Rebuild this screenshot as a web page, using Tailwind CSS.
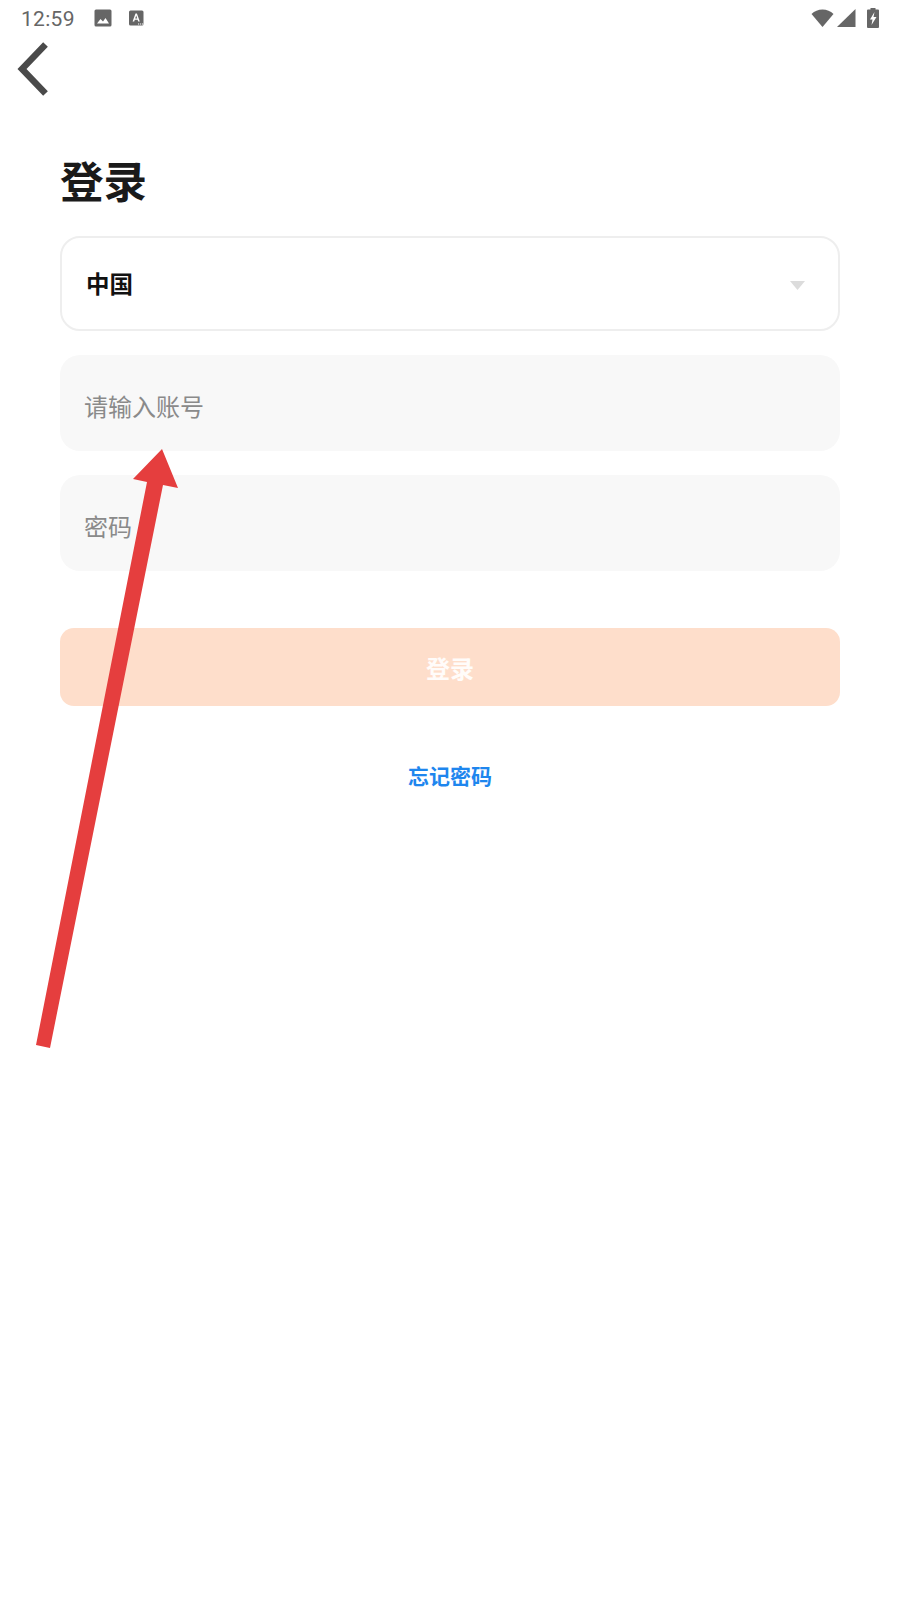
<!DOCTYPE html>
<html lang="zh-CN">
<head>
    <meta charset="UTF-8">
    <meta name="viewport" content="width=device-width, initial-scale=1.0">
    <title>登录</title>
    <script src="https://cdn.jsdelivr.net/npm/@tailwindcss/browser@4"></script>
</head>
<body class="bg-white font-['Roboto','Noto_Sans_CJK_SC',sans-serif]">
    <div class="relative w-[900px] h-[1600px] overflow-hidden bg-white">
        <!-- status bar -->
        <div class="flex items-center h-[36px] pl-[21px] pr-[21px] text-[#666666]">
            <span class="pt-[3px] text-[21px] leading-none tracking-[0.3px]">12:59</span>
            <svg class="ml-[19px]" width="18" height="18" viewBox="0 0 18 18">
                <rect x="0.5" y="0.5" width="17" height="17" rx="1.500" fill="#666666"/>
                <path d="M3 14.500l3.500-4.500 2.500 2.500 2.500-3.500 3.500 5.500z" fill="#ffffff"/>
            </svg>
            <svg class="ml-[17px]" width="15" height="16" viewBox="0 0 15 16">
                <rect x="0" y="0.500" width="14.500" height="15" rx="1.500" fill="#666666"/>
                <path d="M3.600 11.500L6.500 3.500h1.400l2.900 8h-1.600l-.6-1.800H5.800l-.6 1.800zM6.200 8.400h2l-1-3z" fill="#ffffff"/>
                <path d="M9 13.500h1.200v1H9zM11 13.500h1.200v1H11zM13 13.500h1.200v1H13z" fill="#ffffff"/>
            </svg>
            <div class="ml-auto flex items-center">
                <svg width="23" height="18" viewBox="0 0 23 18">
                    <path d="M0.500 5C3.500 2.200 7.200 0.500 11.500 0.500S19.500 2.200 22.500 5L11.500 18z" fill="#666666"/>
                </svg>
                <svg class="ml-[3px]" width="19" height="18" viewBox="0 0 19 18">
                    <path d="M0 18L18.500 0v18z" fill="#666666"/>
                </svg>
                <svg class="ml-[11px]" width="12" height="20" viewBox="0 0 12 20">
                    <path d="M3.500 0h5v1.500H11a1 1 0 0 1 1 1V19a1 1 0 0 1-1 1H1a1 1 0 0 1-1-1V2.500a1 1 0 0 1 1-1h2.500z" fill="#666666"/>
                    <path d="M7.500 4L3 11.500h2.500L4.500 17 9.500 9H6.500z" fill="#ffffff"/>
                </svg>
            </div>
        </div>

        <!-- back -->
        <div class="h-[58px] pl-[17px] pt-[4px]">
            <svg width="32" height="56" viewBox="0 0 32 56">
                <path d="M28.500 4.500L5 29l23.500 24.500" fill="none" stroke="#4a4a4a" stroke-width="6.500"/>
            </svg>
        </div>

        <!-- form -->
        <div class="px-[60px] pt-[64px]">
            <h1 class="text-[43.500px] leading-[52px] font-bold text-[#1a1a1a]">登录</h1>

            <div class="mt-[26px] flex items-center justify-between h-[95px] pt-[3px] pl-[24px] pr-[33px] rounded-[20px] border-2 border-[#eeeeee] bg-white">
                <span class="pt-[2px] text-[23.500px] font-bold text-[#111111]">中国</span>
                <svg width="15" height="9" viewBox="0 0 15 9">
                    <path d="M0 0h15L7.500 9z" fill="#dcdcdc"/>
                </svg>
            </div>

            <div class="mt-[24px] flex items-center h-[96px] pl-[24px] pt-[10px] rounded-[20px] bg-[#f8f8f8] text-[24px] text-[#8a8a8a]">请输入账号</div>
            <div class="mt-[24px] flex items-center h-[96px] pl-[24px] pt-[10px] rounded-[20px] bg-[#f8f8f8] text-[24px] text-[#8a8a8a]">密码</div>

            <button class="mt-[57px] w-full h-[78px] pt-[6px] rounded-[14px] bg-[#fedecb] text-[24px] font-bold text-white/90">登录</button>

            <p class="mt-[56px] text-center text-[21px] leading-[30px] font-bold text-[#1e86ee]">忘记密码</p>
        </div>

        <!-- annotation arrow -->
        <svg class="absolute left-0 top-0 pointer-events-none" width="900" height="1600" viewBox="0 0 900 1600">
            <path d="M162 449L178 488 163 485 50 1048 36 1045 147 482 133 479z" fill="#e53e3e"/>
        </svg>
    </div>
</body>
</html>
